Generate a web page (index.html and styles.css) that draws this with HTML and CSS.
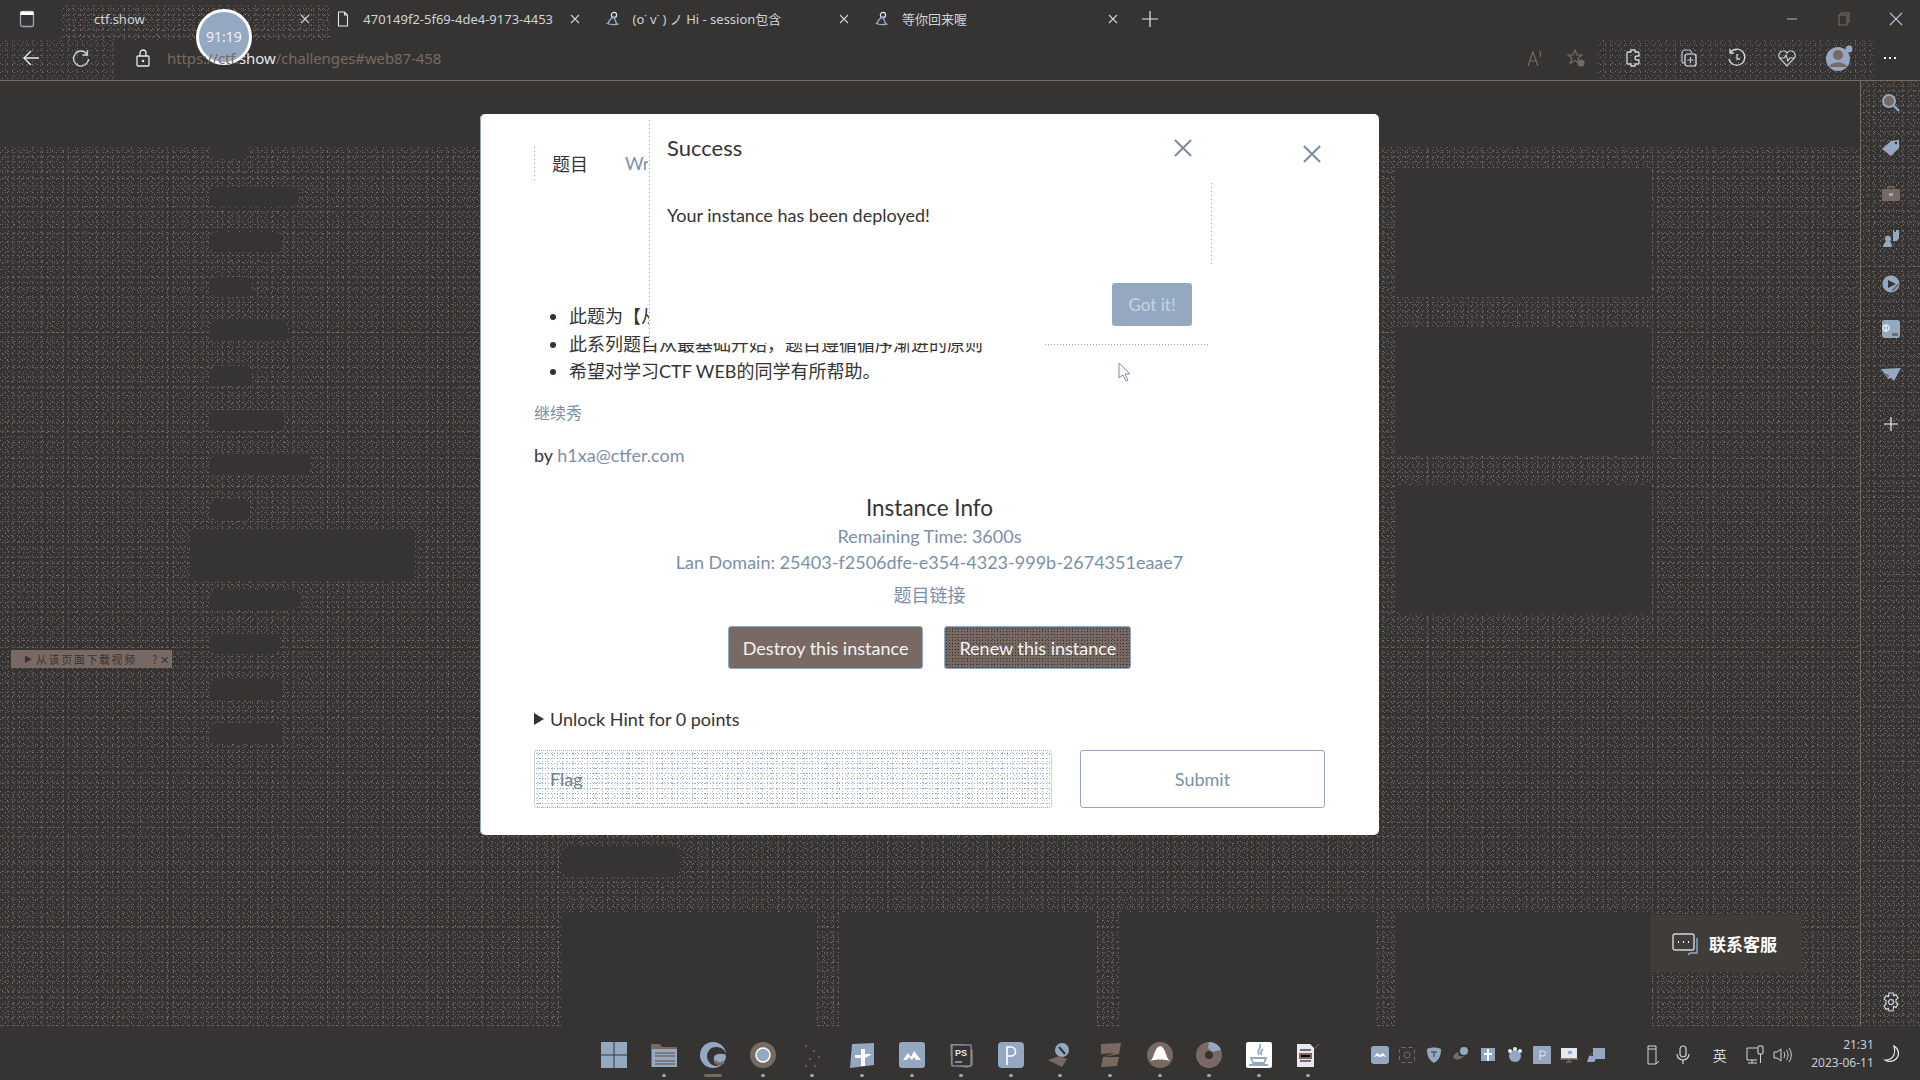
FILE: index.html
```html
<!DOCTYPE html>
<html lang="zh-CN">
<head>
<meta charset="utf-8">
<title>ctf.show</title>
<link rel="stylesheet" href="styles.css">
</head>
<body>
<div class="app">
  <header class="tabbar">
    <svg class="winbtn" viewBox="0 0 16 18"><rect x="1.5" y="1.5" width="13" height="15" rx="2" fill="none" stroke="#95a8c2" stroke-width="1.3"/><rect x="1.5" y="1.5" width="13" height="3.5" fill="#fff"/></svg>
    <div class="tabs">
      <div class="tab tab-active dither"><span class="fav"></span><span class="tab-title">ctf.show</span><svg class="tab-x" viewBox="0 0 10 10"><path d="M1 1l8 8M9 1l-8 8" stroke="#c9d2de" stroke-width="1.1"/></svg></div>
      <div class="tab"><svg class="fav" viewBox="0 0 16 16"><path d="M3.5 1h6l3 3v11h-9zM9.5 1v3h3" fill="none" stroke="#dfe5ec" stroke-width="1.1"/></svg><span class="tab-title">470149f2-5f69-4de4-9173-4453</span><svg class="tab-x" viewBox="0 0 10 10"><path d="M1 1l8 8M9 1l-8 8" stroke="#c9d2de" stroke-width="1.1"/></svg></div>
      <div class="tab"><svg class="fav" viewBox="0 0 16 16"><circle cx="9" cy="4" r="2.6" fill="none" stroke="#dfe5ec" stroke-width="1.2"/><path d="M3 13c1-4 3-6 6-7l3 8M1.500 12c3 2 7 2 12 1" fill="none" stroke="#95a8c2" stroke-width="1.4"/></svg><span class="tab-title">(o˙ v˙ ) ノ Hi - session包含</span><svg class="tab-x" viewBox="0 0 10 10"><path d="M1 1l8 8M9 1l-8 8" stroke="#c9d2de" stroke-width="1.1"/></svg></div>
      <div class="tab"><svg class="fav" viewBox="0 0 16 16"><circle cx="9" cy="4" r="2.6" fill="none" stroke="#dfe5ec" stroke-width="1.2"/><path d="M3 13c1-4 3-6 6-7l3 8M1.500 12c3 2 7 2 12 1" fill="none" stroke="#95a8c2" stroke-width="1.4"/></svg><span class="tab-title">等你回来喔</span><svg class="tab-x" viewBox="0 0 10 10"><path d="M1 1l8 8M9 1l-8 8" stroke="#c9d2de" stroke-width="1.1"/></svg></div>
    </div>
    <svg class="newtab" viewBox="0 0 16 16"><path d="M8 0v16M0 8h16" stroke="#e6e9ee" stroke-width="1.2"/></svg>
    <div class="winctl">
      <svg viewBox="0 0 16 16"><path d="M3 8h10" stroke="#95a8c2" stroke-width="1.2"/></svg>
      <svg viewBox="0 0 16 16"><path d="M3 4h8v10H3zM5 4V2h8v9h-2" fill="none" stroke="#786a62" stroke-width="1.1"/></svg>
      <svg viewBox="0 0 16 16"><path d="M2 2l12 12M14 2L2 14" stroke="#b8c4d4" stroke-width="1.1"/></svg>
    </div>
  </header>

  <nav class="addr">
    <svg class="nav-back" viewBox="0 0 20 20"><path d="M18 10H3M10 3l-7 7 7 7" fill="none" stroke="#e6e9ee" stroke-width="1.4"/></svg>
    <svg class="nav-reload" viewBox="0 0 20 20"><path d="M16 6a7.500 7.500 0 1 0 1.500 5M16.500 2v5h-5" fill="none" stroke="#c9d2de" stroke-width="1.3"/></svg>
    <svg class="nav-lock" viewBox="0 0 16 18"><rect x="2" y="7" width="12" height="10" rx="1" fill="none" stroke="#e6e9ee" stroke-width="1.3"/><path d="M5 7V4a3 3 0 0 1 6 0v3" fill="none" stroke="#e6e9ee" stroke-width="1.3"/><circle cx="8" cy="12" r="1.200" fill="#e6e9ee"/></svg>
    <div class="url">https://ctf.<span class="url-host">show</span>/challenges#web87-458</div>
    <div class="addr-tools">
      <span class="at at1"><svg viewBox="0 0 20 20"><path d="M3 18L8 4l5 14M5 13h6M14 3c2 1 2 4 1 6" fill="none" stroke="#786a62" stroke-width="1.2"/></svg></span>
      <span class="at at2"><svg viewBox="0 0 20 20"><path d="M8 2l2 5h5l-4 3.500 1 5-4-3-5 3 2-5.500L1 7h5z" fill="none" stroke="#786a62" stroke-width="1.2"/><circle cx="14" cy="15" r="3.500" fill="#786a62"/></svg></span>
      <span class="at at3"><svg viewBox="0 0 20 20"><path d="M8 2h4v2h3a1 1 0 0 1 1 1v3h-2a2 2 0 0 0 0 4h2v3a1 1 0 0 1-1 1h-3v2H8v-2H5a1 1 0 0 1-1-1V5a1 1 0 0 1 1-1h3z" fill="none" stroke="#cdd6e1" stroke-width="1.3"/></svg></span>
      <span class="at at4"><svg viewBox="0 0 20 20"><rect x="6" y="6" width="11" height="12" rx="2" fill="none" stroke="#e6e9ee" stroke-width="1.2"/><path d="M6 15H4a2 2 0 0 1-1-2V5a3 3 0 0 1 3-3h5l2 3M11.500 9v6M8.500 12h6" fill="none" stroke="#b8c4d4" stroke-width="1.2"/></svg></span>
      <span class="at at5"><svg viewBox="0 0 20 20"><path d="M3 5a8 8 0 1 1-1 6M3 1v4h4M10 6v5h3" fill="none" stroke="#cdd6e1" stroke-width="1.3"/></svg></span>
      <span class="at at6"><svg viewBox="0 0 20 20"><path d="M10 18L2.500 10a4.500 4.500 0 0 1 7.500-5 4.500 4.500 0 0 1 7.500 5zM2 10h5l2-3 2 6 2-3h5" fill="none" stroke="#cdd6e1" stroke-width="1.1"/></svg></span>
      <span class="at at7"><svg class="avatar" viewBox="0 0 28 28"><circle cx="13" cy="15" r="12" fill="#95a8c2"/><circle cx="13" cy="11" r="5" fill="#786a62"/><path d="M4 23c2-6 16-6 18 0" fill="#786a62"/><circle cx="24" cy="5" r="3.500" fill="#95a8c2"/></svg></span>
      <span class="at at8"><svg viewBox="0 0 20 20"><path d="M4 10h2M9 10h2M14 10h2" stroke="#fff" stroke-width="2"/></svg></span>
    </div>
  </nav>

  <div class="main">
    <section class="page">
      <div class="page-head"></div>
      <div class="page-body dither">
        <aside class="side-nav">
          <div class="nav-row first"><span class="blob w40"></span></div>
          <div class="nav-row"><span class="blob w88"></span></div>
          <div class="nav-row"><span class="blob w72"></span></div>
          <div class="nav-row"><span class="blob w42"></span></div>
          <div class="nav-row"><span class="blob w78"></span></div>
          <div class="nav-row"><span class="blob w42"></span></div>
          <div class="nav-row"><span class="blob w74"></span></div>
          <div class="nav-row"><span class="blob w100"></span></div>
          <div class="nav-row"><span class="blob w40"></span></div>
          <div class="nav-row"><span class="nav-active"></span></div>
          <div class="nav-row"><span class="blob w90"></span></div>
          <div class="nav-row"><span class="blob w70"></span></div>
          <div class="nav-row"><span class="blob w72"></span></div>
          <div class="nav-row"><span class="blob w72"></span></div>
        </aside>
        <div class="content">
          <div class="top-cards">
            <div class="card"></div>
            <div class="card"></div>
            <div class="card"></div>
          </div>
          <div class="heading-blob"></div>
          <div class="bottom-cards">
            <div class="card-b"></div>
            <div class="card-b"></div>
            <div class="card-b"></div>
            <div class="card-b"></div>
          </div>
        </div>
      </div>
    </section>
    <aside class="rail dither">
      <svg viewBox="0 0 20 20"><circle cx="8" cy="8" r="6" fill="#786a62" stroke="#95a8c2" stroke-width="2"/><path d="M12.500 12.500L18 18" stroke="#95a8c2" stroke-width="2.400"/></svg>
      <svg viewBox="0 0 20 20"><path d="M1 11L10 3l8-1v8l-8 8z" fill="#95a8c2"/><circle cx="15" cy="5" r="1.200" fill="#363432"/></svg>
      <svg viewBox="0 0 20 20"><path d="M7 5V3h6v2" fill="none" stroke="#786a62" stroke-width="1.400"/><rect x="1" y="5" width="18" height="12" fill="#786a62"/><rect x="8" y="9" width="4" height="3" fill="#95a8c2"/></svg>
      <svg viewBox="0 0 20 20"><path d="M2 18c0-3 2-4 3-6a3 3 0 1 1 4 0c1 2 2 3 2 6z" fill="#95a8c2"/><path d="M12 1h1v2h2V1h3v8l-2 3h-4z" fill="#95a8c2"/></svg>
      <svg viewBox="0 0 20 20"><circle cx="10" cy="10" r="8.500" fill="#95a8c2"/><path d="M7 6l8 4-8 4z" fill="#363432"/><path d="M11 17l7-7" stroke="#786a62" stroke-width="2"/></svg>
      <svg viewBox="0 0 20 20"><rect x="1" y="1" width="18" height="18" rx="3" fill="#95a8c2"/><path d="M5 6v7M8 9a3 3 0 1 0 0 .1" fill="none" stroke="#e6e9ee" stroke-width="1.500"/><rect x="11" y="14" width="6" height="3" fill="#786a62"/></svg>
      <svg viewBox="0 0 20 20"><path d="M0 4l20-1-7 13-3-3-3 1z" fill="#95a8c2"/><path d="M3 8l5 2-1 4z" fill="#786a62"/></svg>
      <svg class="rail-plus" viewBox="0 0 14 14"><path d="M7 0v14M0 7h14" stroke="#fff" stroke-width="1.100"/></svg>
      <svg class="rail-gear" viewBox="0 0 20 20"><path d="M8 1h4l.6 2.600 2.400-1 2 3.400-2 1.800v2.400l2 1.800-2 3.400-2.400-1L12 19H8l-.6-2.600-2.400 1-2-3.400 2-1.800V8.800L3 7l2-3.400 2.400 1z" fill="none" stroke="#cdd6e1" stroke-width="1.200"/><circle cx="10" cy="10" r="2.500" fill="none" stroke="#cdd6e1" stroke-width="1.200"/></svg>
    </aside>
  </div>

  <footer class="taskbar">
    <div class="apps">
      <div class="app-i"><svg viewBox="0 0 28 28"><path d="M1 1h12.500v12.500H1zM14.500 1H27v12.500H14.500zM1 14.500h12.500V27H1zM14.500 14.500H27V27H14.500z" fill="#95a8c2"/></svg></div>
      <div class="app-i dot"><svg viewBox="0 0 28 28"><path d="M1 3h9l2 3h15v20H1z" fill="#786a62"/><rect x="2" y="8" width="25" height="18" fill="#95a8c2"/><path d="M5 12h20M5 15h20M5 20h20M5 23h20" stroke="#786a62" stroke-width="1.300"/></svg></div>
      <div class="app-i bar"><svg viewBox="0 0 28 28"><circle cx="14" cy="14" r="13" fill="#95a8c2"/><path d="M27 15c0-7-6-9-10-9-6 0-9 5-9 9 0 5 4 10 10 10l8-3c-8 3-12-1-11-6 1-4 12-4 12-1z" fill="#363432"/><path d="M16 20c2 4 6 3 9 1" stroke="#786a62" stroke-width="3" fill="none"/></svg></div>
      <div class="app-i dot"><svg viewBox="0 0 28 28"><circle cx="14" cy="14" r="13" fill="#786a62"/><circle cx="14" cy="14" r="7" fill="#95a8c2" stroke="#fff" stroke-width="1.500"/></svg></div>
      <div class="app-i dot"><svg viewBox="0 0 28 28"><path d="M7 5h2M15 10h2M11 18h2M20 16h2M7 25h2M16 25h2" stroke="#786a62" stroke-width="1.500"/></svg></div>
      <div class="app-i dot"><svg viewBox="0 0 28 28"><path d="M4 3l22-1v22L2 27z" fill="#95a8c2"/><path d="M13 8h4v5h7l-7 4v8h-4v-8H7v-3h6z" fill="#fff"/></svg></div>
      <div class="app-i dot"><svg viewBox="0 0 28 28"><rect x="1" y="1" width="26" height="26" rx="3" fill="#95a8c2"/><path d="M5 19l5-7 3 4 3-6 7 9h-5l-2-3-2 3-3-3-2 3z" fill="#fff"/></svg></div>
      <div class="app-i dot"><svg viewBox="0 0 28 28"><path d="M3 3h15l8 6v15l-6 3-16-3z" fill="#786a62"/><rect x="5" y="4" width="19" height="21" fill="#363432" stroke="#95a8c2"/><text class="ps" x="8" y="15">PS</text><path d="M8 21h7" stroke="#95a8c2" stroke-width="1.500"/></svg></div>
      <div class="app-i dot"><svg viewBox="0 0 28 28"><rect x="1" y="1" width="26" height="26" rx="4" fill="#95a8c2"/><path d="M10 24V6h4a4.500 4.500 0 0 1 0 9h-4" fill="none" stroke="#fff" stroke-width="1.600"/></svg></div>
      <div class="app-i dot"><svg viewBox="0 0 28 28"><circle cx="16" cy="9" r="7" fill="#95a8c2"/><path d="M2 19l11-4 8 3-5 8z" fill="#786a62"/><path d="M13 6l6 7" stroke="#363432" stroke-width="2"/></svg></div>
      <div class="app-i dot"><svg viewBox="0 0 28 28"><path d="M5 3l20-1-2 11-16 3 16 0-2 9-16 1 2-10 12-4-14 1z" fill="#786a62"/></svg></div>
      <div class="app-i dot"><svg viewBox="0 0 28 28"><circle cx="14" cy="14" r="13" fill="#786a62"/><path d="M4 20c4-1 4-14 10-15 6 1 6 13 10 15-6-2-14-2-20 0z" fill="#fff"/></svg></div>
      <div class="app-i dot"><svg viewBox="0 0 28 28"><circle cx="14" cy="14" r="13" fill="#786a62"/><path d="M14 1a13 13 0 0 1 12 8l-9 2-4-4z" fill="#95a8c2"/><circle cx="14" cy="14" r="4" fill="#363432"/></svg></div>
      <div class="app-i dot"><svg viewBox="0 0 28 28"><rect x="1" y="1" width="26" height="26" rx="2" fill="#fff"/><path d="M15 3c2 4-4 6-1 11M18 8c-2 2-3 4-1 6" stroke="#95a8c2" stroke-width="1.800" fill="none"/><path d="M6 17h15l-2 5H8zM4 24h19" stroke="#95a8c2" stroke-width="1.800" fill="none"/></svg></div>
      <div class="app-i dot"><svg viewBox="0 0 28 28"><path d="M3 3h13l4 4v19H3z" fill="#e6e9ee"/><path d="M6 9h11M6 13h11v4H6zM6 20h11" stroke="#786a62" stroke-width="2"/><path d="M20 8l5-5" stroke="#786a62"/></svg></div>
    </div>
    <div class="tray">
      <svg viewBox="0 0 18 18"><rect width="18" height="18" rx="3" fill="#95a8c2"/><path d="M3 11l3-4 3 2 3-2 3 4-3-1-3 1-3-1z" fill="#fff"/></svg>
      <svg viewBox="0 0 18 18"><rect x="1.500" y="1.500" width="15" height="15" rx="2" fill="none" stroke="#786a62" stroke-dasharray="4 3"/><circle cx="9" cy="9" r="3" fill="none" stroke="#786a62"/></svg>
      <svg viewBox="0 0 18 18"><path d="M2 3c4-2 10-2 14 0 0 7-2 11-7 14C4 14 2 10 2 3z" fill="#95a8c2"/><path d="M6 6h6M9 6v5" stroke="#363432"/></svg>
      <svg viewBox="0 0 18 18"><circle cx="12" cy="5" r="4" fill="#95a8c2"/><path d="M1 11c1-3 4-5 6-5-2 3 0 5 5 4-2 3-8 6-11 1z" fill="#786a62"/></svg>
      <svg viewBox="0 0 18 18"><path d="M2 2h14v13H2z" fill="#95a8c2"/><path d="M8 3h2v4h3v2h-3v6H8V9H5V7h3z" fill="#fff"/></svg>
      <svg viewBox="0 0 18 18"><circle cx="9" cy="10" r="6" fill="#95a8c2"/><circle cx="4" cy="5" r="2" fill="#e6e9ee"/><circle cx="9" cy="3" r="2" fill="#e6e9ee"/><circle cx="14" cy="5" r="2" fill="#e6e9ee"/></svg>
      <svg viewBox="0 0 18 18"><rect width="18" height="18" rx="1" fill="#95a8c2"/><path d="M7 14V5h3a2 2 0 0 1 0 5H7" fill="none" stroke="#e6e9ee"/></svg>
      <svg viewBox="0 0 18 18"><rect x="1" y="2" width="16" height="11" fill="#e6e9ee"/><path d="M0 13h18M9 13v3M6 16h6" stroke="#786a62" stroke-width="1.500"/><rect x="8" y="5" width="4" height="3" fill="#95a8c2"/></svg>
      <svg viewBox="0 0 18 18"><path d="M6 2h12v11H9l-2 3-7 0 2-6h4z" fill="#95a8c2"/><path d="M2 10l4-3" stroke="#786a62"/></svg>
    </div>
    <div class="sys">
      <span class="sy sy1"><svg viewBox="0 0 20 20"><path d="M5 1h8v18H5zM5 4h8M13 19l3-3" fill="none" stroke="#cdd6e1"/></svg></span>
      <span class="sy sy2"><svg viewBox="0 0 20 20"><rect x="7" y="1" width="6" height="11" rx="3" fill="none" stroke="#cdd6e1" stroke-width="1.200"/><path d="M4 9a6 6 0 0 0 12 0M10 15v4" fill="none" stroke="#cdd6e1" stroke-width="1.200"/></svg></span>
      <span class="sy sy3 ime">英</span>
      <span class="sy sy4"><svg viewBox="0 0 20 20"><path d="M12 3H2v12h10M7 15v3M3 18h9" fill="none" stroke="#cdd6e1"/><rect x="13" y="1" width="5" height="8" rx="1" fill="none" stroke="#e6e9ee"/><path d="M15.500 9v9" stroke="#cdd6e1"/></svg></span>
      <span class="sy sy5"><svg viewBox="0 0 20 20"><path d="M2 7h3l4-3v12l-4-3H2zM12 7c1 2 1 4 0 6M14.500 5c2 3 2 7 0 10M17 3c3 4 3 10 0 14" fill="none" stroke="#cdd6e1"/></svg></span>
    </div>
    <div class="clock"><div>21:31</div><div>2023-06-11</div></div>
    <svg class="moon" viewBox="0 0 20 20"><path d="M11 2c5 3 6 9 2 13-3 3-8 3-11 1 4 0 7-1 9-5 1-3 1-6 0-9z" fill="none" stroke="#e6e9ee" stroke-width="1.200"/></svg>
  </footer>
</div>

<div class="timer">91:19</div>

<div class="video-bar"><span class="vb-play">▶</span><span class="vb-text">从该页面下载视频</span><span class="vb-tail">? ✕</span></div>

<div class="contact">
  <svg viewBox="0 0 26 24"><rect x="1" y="2" width="21" height="16" rx="2" fill="none" stroke="#cdd6e1" stroke-width="1.400"/><path d="M6 10h1M11 10h1M16 10h1" stroke="#fff" stroke-width="2"/><path d="M25 6v15h-7l-2 2" fill="none" stroke="#95a8c2" stroke-width="1.400"/></svg>
  <span>联系客服</span>
</div>

<div class="modal">
  <svg class="modal-x" viewBox="0 0 20 20"><path d="M1 1l18 18M19 1L1 19" stroke="#7e8ca0" stroke-width="2.300"/></svg>
  <div class="tabs-m"><span class="tm-on">题目</span><span class="tm-off">Writeup</span></div>
  <ul class="desc">
    <li>此题为【从零开始学WEB】系列</li>
    <li>此系列题目从最基础开始，题目遵循循序渐进的原则</li>
    <li>希望对学习CTF WEB的同学有所帮助。</li>
  </ul>
  <p class="tag">继续秀</p>
  <p class="by">by <a>h1xa@ctfer.com</a></p>
  <h3 class="inst-title">Instance Info</h3>
  <p class="inst-line">Remaining Time: 3600s</p>
  <p class="inst-line">Lan Domain: 25403-f2506dfe-e354-4323-999b-2674351eaae7</p>
  <p class="inst-link">题目链接</p>
  <div class="inst-btns"><button class="btn">Destroy this instance</button><button class="btn btn-d">Renew this instance</button></div>
  <div class="hint"><span class="tri"></span>Unlock Hint for 0 points</div>
  <div class="flag-row"><div class="flag-in">Flag</div><button class="submit">Submit</button></div>

  <div class="alert">
    <div class="alert-head"><span>Success</span><svg viewBox="0 0 20 20"><path d="M1 1l18 18M19 1L1 19" stroke="#7e8ca0" stroke-width="2.300"/></svg></div>
    <p class="alert-body">Your instance has been deployed!</p>
    <div class="alert-foot"><button class="got">Got it!</button></div>
  </div>
  <span class="alert-edge-r"></span>
  <span class="alert-edge-b"></span>
</div>

<svg class="cursor" viewBox="0 0 14 20"><path d="M1 1v15l4-3 3 6 2-1-3-6h5z" fill="#fff" stroke="#7e8ca0"/></svg>
</body>
</html>
```

FILE: styles.css
```css
:root {
  --bg: #363432;
  --blue: #95a8c2;
  --taupe: #786a62;
  --link: #7b8fa9;
  --dot: radial-gradient(circle, #786a62 0 .55px, transparent .7px);
  --dot2: radial-gradient(circle, #6a625c 0 .55px, transparent .7px);
}
* { box-sizing: border-box; }
html, body { margin: 0; padding: 0; }
body {
  width: 1920px;
  height: 1080px;
  overflow: hidden;
  background: var(--bg);
  font-family: "Lato", "Noto Sans CJK SC", sans-serif;
  position: relative;
}
p, h3, ul { margin: 0; padding: 0; }
svg { display: block; flex: none; }
.dither {
  background-image: var(--dot), var(--dot2), var(--dot), var(--dot2), var(--dot), var(--dot2), var(--dot), var(--dot2);
  background-size: 5px 7px, 7px 5px, 7px 9px, 9px 7px, 11px 5px, 5px 11px, 11px 13px, 13px 11px;
  background-position: 0 0, 2px 3px, 4px 1px, 1px 5px, 3px 2px, 6px 4px, 8px 6px, 5px 9px;
}

.app { width: 1920px; height: 1080px; display: flex; flex-direction: column; }

/* tab strip */
.tabbar { height: 40px; display: flex; align-items: center; flex: none; padding-bottom: 3px; }
.winbtn { width: 16px; height: 18px; margin-left: 19px; }
.tabs { display: flex; margin-left: 26px; align-self: flex-start; }
.tab {
  width: 269.3px; height: 35px; margin-top: 5px; display: flex; align-items: center;
  padding: 0 20px 8px 5px; gap: 12px; color: #cdd3da;
  font: 13px "Noto Sans", "Noto Sans CJK SC", sans-serif;
}
.fav { width: 16px; height: 16px; flex: none; }
.tab-title { flex: 1; white-space: nowrap; overflow: hidden; min-width: 0; }
.tab-x { width: 10px; height: 10px; margin-left: 4px; }
.newtab { width: 16px; height: 16px; margin-left: 4px; }
.winctl { margin-left: auto; display: flex; gap: 36px; padding-right: 16px; }
.winctl svg { width: 16px; height: 16px; }

/* address bar */
.addr {
  height: 41px; flex: none; display: flex; align-items: center; padding-bottom: 4px;
  border-bottom: 1px solid var(--taupe); position: relative;
}
.addr::before, .addr::after {
  content: ""; position: absolute; top: 0; bottom: 0;
  background-image: var(--dot), var(--dot2), var(--dot), var(--dot2);
  background-size: 5px 7px, 7px 5px, 7px 9px, 9px 7px;
  background-position: 0 0, 2px 3px, 4px 1px, 1px 5px;
}
.addr::before { left: 0; width: 115px; }
.addr::after { left: 1598px; width: 277px; }
.addr > * { position: relative; z-index: 1; }
.nav-back { width: 20px; height: 20px; margin-left: 21px; }
.nav-reload { width: 20px; height: 20px; margin-left: 30px; }
.nav-lock { width: 16px; height: 18px; margin-left: 44px; }
.url {
  margin-left: 16px; color: var(--taupe); white-space: nowrap;
  font: 15px "Noto Sans", sans-serif; letter-spacing: -.1px;
}
.url-host { color: #e6e9ee; }
.addr-tools { margin-left: auto; display: flex; padding-right: 9px; }
.at { display: flex; justify-content: center; align-items: center; }
.at svg { width: 20px; height: 20px; }
.at svg.avatar { width: 28px; height: 28px; }
.at1 { width: 43px; padding-left: 6px; } .at2 { width: 44px; padding-left: 4px; } .at3 { width: 72px; } .at4 { width: 40px; }
.at5 { width: 56px; } .at6 { width: 44px; } .at7 { width: 60px; } .at8 { width: 42px; }

/* page */
.main { flex: 1; display: flex; min-height: 0; }
.page { flex: 1; display: flex; flex-direction: column; min-width: 0; }
.page-head { height: 66px; flex: none; }
.page-body { flex: 1; display: flex; min-height: 0; overflow: hidden; }
.side-nav { width: 225px; margin-left: 190px; display: flex; flex-direction: column; flex: none; }
.nav-row { height: 44.7px; display: flex; align-items: center; padding-left: 20px; flex: none; }
.nav-row.first { height: 28px; align-items: flex-start; }
.first .blob { height: 11px; }
.blob { height: 20px; background: var(--bg); border-radius: 7px; display: block; }
.w40 { width: 40px; } .w42 { width: 42px; } .w70 { width: 70px; } .w72 { width: 72px; } .w74 { width: 74px; }
.w78 { width: 78px; } .w88 { width: 88px; } .w90 { width: 90px; } .w100 { width: 100px; }
.nav-active { display: block; width: 225px; height: 50px; margin-left: -20px; background: var(--bg); border-radius: 4px; flex: none; }
.content { margin-left: 147px; width: 1090px; padding-top: 22px; flex: none; }
.top-cards { display: flex; flex-direction: column; gap: 30px; width: 255px; margin-left: 835px; }
.card { height: 128px; background: var(--bg); border-radius: 3px; }
.heading-blob { width: 118px; height: 31px; margin-top: 233px; background: var(--bg); border-radius: 8px; }
.bottom-cards { display: grid; grid-template-columns: repeat(4, 255px); column-gap: 23.33px; margin-top: 35px; }
.card-b { height: 116px; background: var(--bg); }

/* right rail */
.rail {
  width: 60px; flex: none; border-left: 1px solid var(--taupe);
  display: flex; flex-direction: column; align-items: center;
  padding: 12px 0 14px; gap: 25.3px;
}
.rail svg { width: 20px; height: 20px; }
.rail .rail-plus { width: 14px; height: 14px; margin-top: 7px; }
.rail .rail-gear { margin-top: auto; }

/* taskbar */
.taskbar { height: 54px; flex: none; display: flex; align-items: flex-start; padding-top: 15px; background: var(--bg); }
.apps { display: flex; margin-left: 600px; gap: 21.6px; }
.app-i { width: 28px; height: 38px; display: flex; flex-direction: column; align-items: center; }
.app-i svg { width: 28px; height: 28px; }
.dot::after { content: ""; width: 4px; height: 3px; margin-top: 5px; background: var(--blue); border-radius: 2px; }
.bar::after { content: ""; width: 18px; height: 3px; margin-top: 5px; background: var(--taupe); border-radius: 2px; }
.ps { font: bold 9px "Liberation Sans", sans-serif; fill: #e6e9ee; }
.tray { display: flex; gap: 9px; margin-left: 49px; margin-top: 5px; }
.tray svg { width: 18px; height: 18px; }
.sys { display: flex; margin-left: 32.5px; margin-top: 4px; }
.sy { display: flex; justify-content: center; }
.sy svg { width: 20px; height: 20px; }
.sy1, .sy2 { width: 30px; } .sy3 { width: 44px; } .sy4 { width: 26px; } .sy5 { width: 28px; }
.ime { color: #cdd6e1; font: 14px/20px "Noto Sans CJK SC", sans-serif; }
.clock { width: 78px; text-align: right; color: #c3cedb; font: 12px/18px "Noto Sans", sans-serif; margin-top: -5px; white-space: nowrap; }
.moon { width: 20px; height: 20px; margin-left: 9px; margin-top: 3px; }

/* overlays */
.timer {
  position: absolute; left: 196px; top: 9px; width: 56px; height: 56px; border-radius: 50%;
  background: var(--blue); border: 3px solid #fff; color: #eef1f5;
  font: 14px/50px "Noto Sans", sans-serif; text-align: center;
}
.video-bar {
  position: absolute; left: 11px; top: 650px; width: 161px; height: 18px;
  background: var(--taupe); color: var(--bg); display: flex; align-items: center;
  font: 11px/18px "Noto Sans CJK SC", sans-serif; padding: 0 3px 0 13px;
}
.vb-play { font-size: 8px; margin-right: 4px; }
.vb-text { letter-spacing: 1.6px; white-space: nowrap; }
.vb-tail { margin-left: auto; white-space: nowrap; }
.contact {
  position: absolute; left: 1650px; top: 915px; width: 152px; height: 57px;
  display: flex; align-items: center; gap: 11px; padding-left: 22px;
  background: #3f3c3a; color: #fff; font: bold 17px "Noto Sans CJK SC", sans-serif;
}
.contact svg { width: 26px; height: 24px; }

/* modal */
.modal {
  position: absolute; left: 480px; top: 114px; width: 899px; height: 721px;
  background: #fff; border-radius: 5px; padding: 33px 54px 0; color: var(--bg);
  box-shadow: inset 1px 0 0 var(--blue); font-size: 18px;
}
.modal-x { position: absolute; left: 823px; top: 31px; width: 18px; height: 18px; }
.tabs-m {
  height: 33px; display: flex; align-items: center; gap: 37px; padding-left: 18px; padding-bottom: 2px; font-size: 18px;
  background: repeating-linear-gradient(to bottom, #8fa0b8 0 1px, transparent 1px 4px) left / 1px 100% no-repeat;
}
.tm-off { color: var(--link); width: 23px; overflow: hidden; white-space: nowrap; }
.desc { margin-top: 123px; padding-left: 35px; font-size: 18px; line-height: 27.5px; }
.tag { margin-top: 16.5px; line-height: 22px; font-size: 16px; color: var(--link); }
.by { margin-top: 19px; line-height: 24px; font-size: 18px; }
.by a { color: var(--link); }
.inst-title { margin-top: 26px; text-align: center; font-weight: 400; font-size: 22.5px; line-height: 30px; }
.inst-line { text-align: center; color: var(--link); font-size: 18px; line-height: 26px; }
.inst-link { margin-top: 7px; text-align: center; color: var(--link); font-size: 18px; line-height: 26px; }
.inst-btns { margin-top: 18px; display: flex; justify-content: center; gap: 21px; }
.btn {
  height: 43px; padding: 0 14px; background-color: var(--taupe); color: #f3f4f6;
  border: 1px solid var(--blue); border-radius: 3px; font: 18px "Lato", sans-serif;
}
.btn-d {
  background-image:
    radial-gradient(circle, #363432 0 .55px, transparent .7px),
    radial-gradient(circle, #4a4440 0 .55px, transparent .7px);
  background-size: 3px 3px, 5px 5px;
}
.hint { margin-top: 38px; line-height: 24px; display: flex; align-items: center; gap: 6px; }
.tri { width: 0; height: 0; border-left: 10px solid var(--bg); border-top: 6px solid transparent; border-bottom: 6px solid transparent; }
.flag-row { margin-top: 19px; display: flex; justify-content: space-between; }
.flag-in {
  width: 518px; height: 58px; border: 1px dotted var(--blue); border-radius: 3px;
  padding-left: 15px; line-height: 56px; color: #6d7e95;
  background-image:
    radial-gradient(circle, #95a8c2 0 .55px, transparent .7px),
    radial-gradient(circle, #b8c5d6 0 .55px, transparent .7px),
    radial-gradient(circle, #a8b8cc 0 .55px, transparent .7px),
    radial-gradient(circle, #95a8c2 0 .55px, transparent .7px);
  background-size: 3px 5px, 5px 3px, 7px 7px, 11px 5px;
}
.submit {
  width: 245px; height: 58px; background: #fff; border: 1px solid var(--blue); border-radius: 3px;
  color: var(--link); font: 18px "Lato", sans-serif;
}
.alert {
  position: absolute; left: 169px; top: 6px; width: 558px; height: 223px;
  background: repeating-linear-gradient(to bottom, #8fa0b8 0 1px, transparent 1px 4px) left / 1px 100% no-repeat, #fff;
  padding-left: 18px; display: flex; flex-direction: column;
}
.alert-head { display: flex; justify-content: space-between; align-items: center; height: 54px; padding-top: 1px; padding-right: 15px; font-size: 22px; }
.alert-head svg { width: 18px; height: 18px; }
.alert-body { margin-top: 29px; line-height: 24px; }
.alert-foot { margin-top: 56px; display: flex; justify-content: flex-end; padding-right: 15px; }
.got {
  width: 80px; height: 43px; background: var(--blue); border: 0; border-radius: 3px;
  color: #c8d3e0; font: 17px "Lato", sans-serif;
}
.alert-edge-r {
  position: absolute; left: 731px; top: 69px; height: 83px; width: 1px;
  background: repeating-linear-gradient(to bottom, #8fa0b8 0 1px, transparent 1px 4px);
}
.alert-edge-b {
  position: absolute; left: 565px; top: 230px; width: 163px; height: 1px;
  background: repeating-linear-gradient(to right, #8fa0b8 0 1px, transparent 1px 3px);
}
.cursor { position: absolute; left: 1118px; top: 362px; width: 14px; height: 20px; }
```
